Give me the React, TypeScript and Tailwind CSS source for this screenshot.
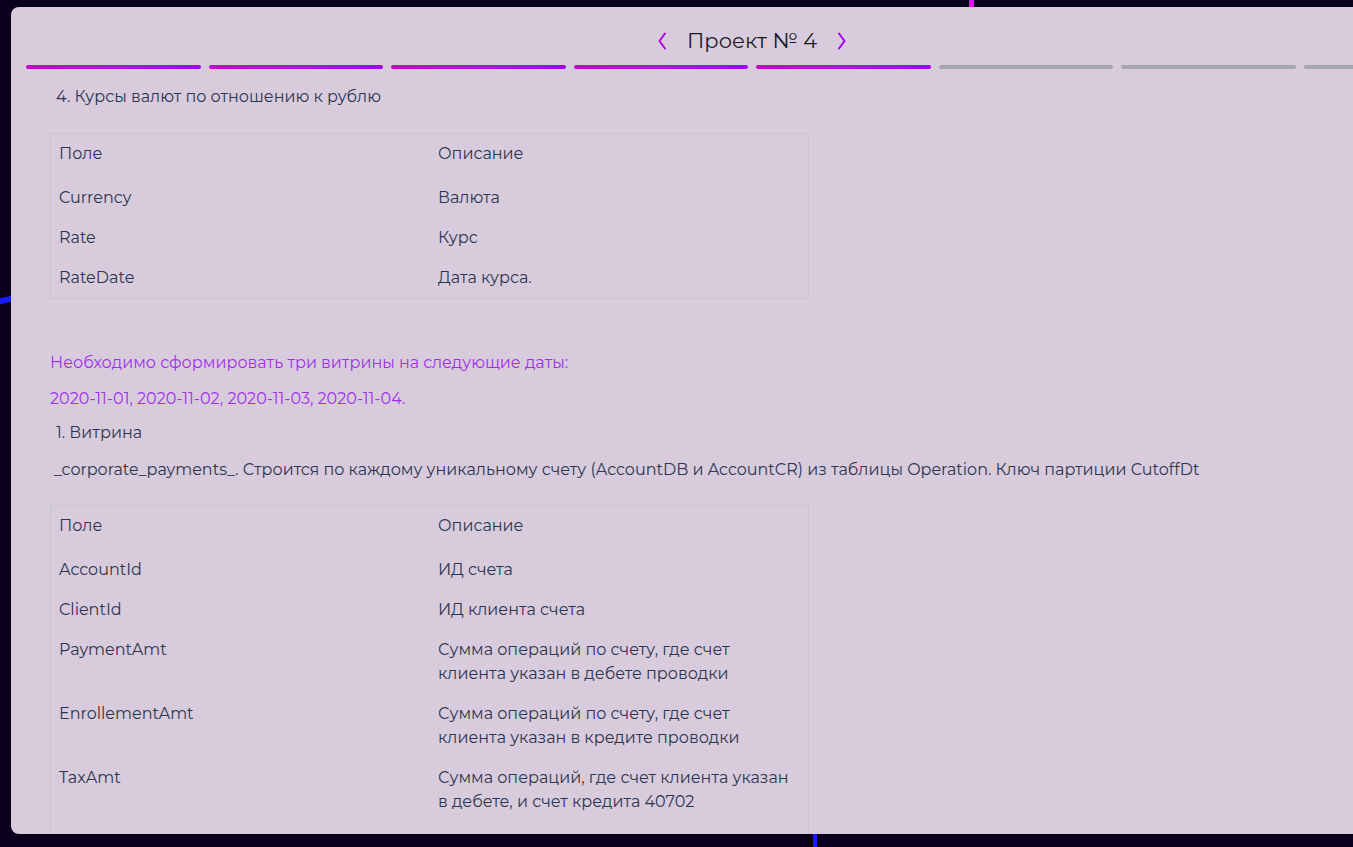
const font = { fontFamily: '"Montserrat", "Open Sans", sans-serif' };

type Row = { field: string; desc: string[] };

const rates: Row[] = [
  { field: "Currency", desc: ["Валюта"] },
  { field: "Rate", desc: ["Курс"] },
  { field: "RateDate", desc: ["Дата курса."] },
];

const payments: Row[] = [
  { field: "AccountId", desc: ["ИД счета"] },
  { field: "ClientId", desc: ["ИД клиента счета"] },
  { field: "PaymentAmt", desc: ["Сумма операций по счету, где счет", "клиента указан в дебете проводки"] },
  { field: "EnrollementAmt", desc: ["Сумма операций по счету, где счет", "клиента указан в кредите проводки"] },
  { field: "TaxAmt", desc: ["Сумма операций, где счет клиента указан", "в дебете, и счет кредита 40702"] },
];

function Chevron({ dir, color }: { dir: "left" | "right"; color: string }) {
  return (
    <svg width="10" height="18" viewBox="0 0 10 18" fill="none" className={color}>
      <path
        d={dir === "left" ? "M8 1.5 L2.5 9 L8 16.5" : "M2 1.5 L7.5 9 L2 16.5"}
        stroke="currentColor"
        strokeWidth="2"
        strokeLinecap="round"
        strokeLinejoin="round"
      />
    </svg>
  );
}

function FieldTable({ rows, tail = false }: { rows: Row[]; tail?: boolean }) {
  return (
    <div className={tail ? "w-[759px] border border-[#c4c6d4] px-2 pb-10" : "w-[759px] border border-[#c4c6d4] px-2"}>
      <div className="flex pt-2 pb-[12px] leading-6">
        <div className="w-[379px] shrink-0">Поле</div>
        <div className="flex-1">Описание</div>
      </div>
      {rows.map((r) => (
        <div key={r.field} className="flex py-2 leading-6">
          <div className="w-[379px] shrink-0">{r.field}</div>
          <div className="flex-1 whitespace-nowrap">
            {r.desc.map((line) => (
              <div key={line}>{line}</div>
            ))}
          </div>
        </div>
      ))}
    </div>
  );
}

export default function App() {
  const segments = [true, true, true, true, true, false, false, false];

  return (
    <div className="relative h-[847px] w-full overflow-hidden bg-[#0b001c] pl-[11px] pt-[7px]" style={font}>
      <div className="absolute left-[969px] top-0 h-[7px] w-[5px] bg-[#ff00ff]" />
      <div className="absolute left-0 top-[297px] h-[6px] w-[11px] -skew-y-12 bg-[#1a1aff]" />
      <div className="absolute left-[813px] top-[834px] h-[13px] w-[4px] bg-[#1a1aff]" />

      <div className="relative h-[827px] w-[1482px] overflow-hidden rounded-lg bg-[#d8cbdc] text-[16px] text-[#2c3650]">
        <div className="flex h-[58px] items-center justify-center gap-[20px] pt-[12px] pb-[2px]">
          <Chevron dir="left" color="text-[#b300e6]" />
          <span className="text-[21px] text-[#1b1b1f]">Проект № 4</span>
          <Chevron dir="right" color="text-[#a000ff]" />
        </div>
        <div className="flex gap-2 px-[15px]">
          {segments.map((on, i) => (
            <div
              key={i}
              className={
                on
                  ? "h-1 w-[175px] rounded-full bg-gradient-to-r from-[#c800c8] to-[#a000ff]"
                  : "h-1 w-[175px] rounded-full bg-[#a6a5b2]"
              }
            />
          ))}
        </div>

        <div className="pl-[39px]">
          <p className="ml-[6px] mt-[16px] leading-6">4. Курсы валют по отношению к рублю</p>
          <div className="mt-[24px]">
            <FieldTable rows={rates} />
          </div>

          <p className="mt-[52px] leading-6 text-[#a02ff0]">Необходимо сформировать три витрины на следующие даты:</p>
          <p className="mt-3 leading-6 text-[#a02ff0]">2020-11-01, 2020-11-02, 2020-11-03, 2020-11-04.</p>
          <p className="ml-[6px] mt-[10px] leading-6">1. Витрина</p>
          <p className="ml-[4px] mt-[13px] leading-6">
            _corporate_payments_. Строится по каждому уникальному счету (AccountDB и AccountCR) из таблицы Operation. Ключ партиции CutoffDt
          </p>
          <div className="mt-[23px]">
            <FieldTable rows={payments} tail />
          </div>
        </div>
      </div>
    </div>
  );
}
